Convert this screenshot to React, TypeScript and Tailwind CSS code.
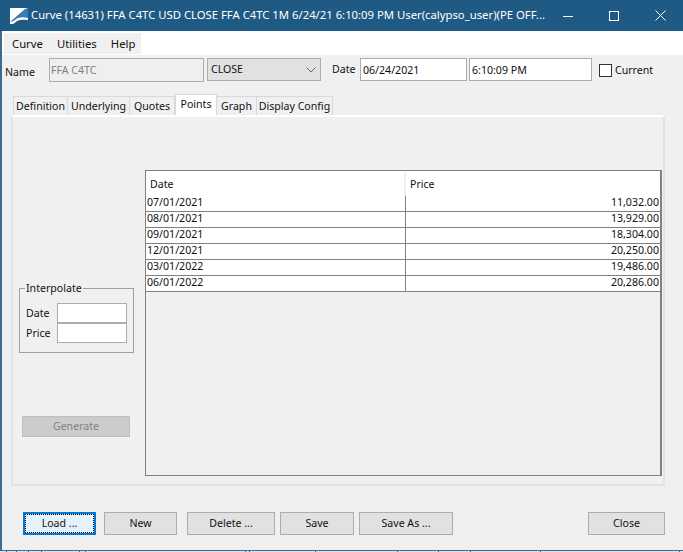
const rows = [
  ["07/01/2021", "11,032.00"],
  ["08/01/2021", "13,929.00"],
  ["09/01/2021", "18,304.00"],
  ["12/01/2021", "20,250.00"],
  ["03/01/2022", "19,486.00"],
  ["06/01/2022", "20,286.00"],
];

const taskbarGaps = ["w-[7px]", "w-[10px]", "w-[12px]", "w-[13px]", "w-[38px]", "w-[6px]", "w-[160px]", "w-[4px]", "w-[66px]", "w-[82px]", "w-[41px]", "w-[32px]", "w-[70px]", "w-[139px]"];

function TitleBar() {
  return (
    <div className="flex h-[31px] shrink-0 items-center bg-[#1f5a84] text-white">
      <svg className="ml-[10px] h-[16px] w-[18px] shrink-0" viewBox="0 0 18 16">
        <rect width="18" height="16" fill="#ffffff" />
        <path d="M0 14 L15 1 L18 0 L18 10 Q9 8 5 12 Q2 14 0 14 Z" fill="#3a78b8" />
        <path d="M3 16 Q5 15 7 13 Q11 11 18 12 L18 16 Z" fill="#1f5a84" />
      </svg>
      <span className="ml-[3px] min-w-0 flex-1 whitespace-nowrap text-[11.3px]">
        Curve (14631) FFA C4TC USD CLOSE FFA C4TC 1M 6/24/21 6:10:09 PM User(calypso_user)(PE OFF...
      </span>
      <div className="flex shrink-0">
        <div className="flex h-[31px] w-[46px] items-center justify-center">
          <svg width="10" height="10" viewBox="0 0 10 10">
            <path d="M0 5.5H10" stroke="#ffffff" />
          </svg>
        </div>
        <div className="flex h-[31px] w-[46px] items-center justify-center">
          <svg width="10" height="10" viewBox="0 0 10 10">
            <rect x="0.5" y="0.5" width="9" height="9" fill="none" stroke="#ffffff" />
          </svg>
        </div>
        <div className="flex h-[31px] w-[46px] items-center justify-center">
          <svg width="11" height="11" viewBox="0 0 11 11">
            <path d="M0.5 0.5L10.5 10.5M10.5 0.5L0.5 10.5" stroke="#ffffff" />
          </svg>
        </div>
      </div>
    </div>
  );
}

function Tab({ label, width, active }: { label: string; width: string; active?: boolean }) {
  if (active) {
    return (
      <div className={`flex h-[21px] items-center justify-center whitespace-nowrap border border-b-0 border-[#d9d9d9] bg-white pb-[1px] ${width}`}>
        {label}
      </div>
    );
  }
  return (
    <div className={`flex h-[19px] items-center justify-center whitespace-nowrap border border-b-0 border-l-0 border-[#d9d9d9] bg-[#f0f0f0] pt-[2px] ${width}`}>
      {label}
    </div>
  );
}

function Btn({ label, width }: { label: string; width: string }) {
  return (
    <div className={`flex h-[23px] items-center justify-center border border-[#adadad] bg-[#e1e1e1] ${width}`}>
      {label}
    </div>
  );
}

export default function App() {
  return (
    <div
      className="flex h-[552px] w-[683px] flex-col overflow-hidden bg-[#f0f0f0] text-[10.6px] text-[#111111]"
      style={{ fontFamily: '"Noto Sans", "Open Sans", sans-serif' }}
    >
      <TitleBar />
      <div className="flex min-h-0 flex-1 flex-col border-b border-l-2 border-[#3c6b8f]">
        <div className="flex h-[24px] shrink-0 bg-white">
          <div className="ml-[2px] mt-[2px] flex h-[21px] w-[137px] items-center gap-[14px] bg-[#f0f0f0] pl-[8px] pt-[2px] text-[11.3px]">
            <span>Curve</span>
            <span>Utilities</span>
            <span>Help</span>
          </div>
        </div>

        <div className="flex h-[27px] shrink-0 items-start pt-[3px]">
          <span className="ml-[3px] mt-[7px] w-[44px]">Name</span>
          <div className="flex h-[24px] w-[155px] items-center border border-[#adadad] bg-[#efefef] pl-[1px] pt-[2px] text-[#808080]">
            FFA C4TC
          </div>
          <div className="ml-[3px] flex h-[23px] w-[114px] items-center justify-between border border-[#adadad] bg-[#e1e1e1] pl-[3px] pr-[4px]">
            <span>CLOSE</span>
            <svg width="10" height="6" viewBox="0 0 10 6">
              <path d="M0.5 0.5L5 5L9.5 0.5" fill="none" stroke="#666666" />
            </svg>
          </div>
          <span className="ml-[11px] mt-[4px] w-[28px]">Date</span>
          <div className="flex h-[23px] w-[107px] items-center border border-[#adadad] bg-white pl-[2px] pt-[2px]">06/24/2021</div>
          <div className="ml-[2px] flex h-[23px] w-[123px] items-center border border-[#adadad] bg-white pl-[2px] pt-[2px]">6:10:09 PM</div>
          <div className="ml-[7px] mt-[6px] h-[13px] w-[13px] border border-[#333333] bg-white" />
          <span className="ml-[3px] mt-[5px]">Current</span>
        </div>

        <div className="mt-[12px] flex h-[21px] shrink-0 items-end pl-[11px]">
          <div className="flex h-[19px] w-[55px] items-center justify-center border border-b-0 border-[#d9d9d9] pt-[2px]">Definition</div>
          <Tab label="Underlying" width="w-[62px]" />
          <Tab label="Quotes" width="w-[45px]" />
          <Tab label="Points" width="w-[42px]" active />
          <Tab label="Graph" width="w-[40px]" />
          <Tab label="Display Config" width="w-[76px]" />
        </div>

        <div className="ml-[9px] flex h-[371px] w-[654px] shrink-0 border-2 border-[#e3e3e3] border-t-white pr-[1px]">
          <div className="flex w-[132px] shrink-0 flex-col pl-[6px]">
            <fieldset className="mt-[164px] h-[72px] w-[115px] border border-[#a0a0a0] pl-[6px]">
              <legend className="ml-[-1px] px-[1px] leading-[14px]">Interpolate</legend>
              <div className="mt-[8px] flex h-[20px] items-center justify-between pr-[6px]">
                <span className="mt-[2px]">Date</span>
                <div className="h-[20px] w-[70px] border border-[#adadad] bg-white" />
              </div>
              <div className="flex h-[20px] items-center justify-between pr-[6px]">
                <span className="mt-[2px]">Price</span>
                <div className="h-[20px] w-[70px] border border-[#adadad] bg-white" />
              </div>
            </fieldset>
            <div className="ml-[3px] mt-[63px] flex h-[21px] w-[108px] items-center justify-center border border-[#bfbfbf] bg-[#cccccc] text-[#808080]">
              Generate
            </div>
          </div>

          <div className="mt-[53px] flex h-[306px] w-[517px] flex-col border border-r-2 border-[#808080]">
            <div className="flex h-[25px] shrink-0 bg-white pt-[2px]">
              <div className="flex w-[260px] items-center border-r-2 border-[#f0f0f0] pl-[4px]">Date</div>
              <div className="flex flex-1 items-center pl-[4px]">Price</div>
            </div>
            {rows.map(([date, price]) => (
              <div key={date} className="flex h-[16px] shrink-0 border-b border-[#808080] bg-white">
                <div className="flex w-[260px] items-center border-r border-[#808080] pb-[1px] pl-[1px]">{date}</div>
                <div className="flex flex-1 items-center justify-end pb-[1px] pr-[1px]">{price}</div>
              </div>
            ))}
          </div>
        </div>

        <div className="mt-[26px] flex shrink-0 pl-[21px]">
          <div className="flex h-[23px] w-[73px] items-center justify-center border-2 border-[#0078d7] bg-[#e5f1fb]">
            <div className="flex h-[19px] w-[69px] items-center justify-center border border-dotted border-black">Load ...</div>
          </div>
          <Btn label="New" width="ml-[8px] w-[73px]" />
          <Btn label="Delete ..." width="ml-[10px] w-[88px]" />
          <Btn label="Save" width="ml-[5px] w-[74px]" />
          <Btn label="Save As ..." width="ml-[5px] w-[94px]" />
          <Btn label="Close" width="ml-[135px] w-[77px]" />
        </div>
      </div>
      <div className="flex h-[1px] shrink-0 bg-[#dfe3e6]">
        {taskbarGaps.map((w, i) => (
          <div key={i} className={`h-[1px] border-r border-[#3c6b8f] ${w}`} />
        ))}
      </div>
    </div>
  );
}
